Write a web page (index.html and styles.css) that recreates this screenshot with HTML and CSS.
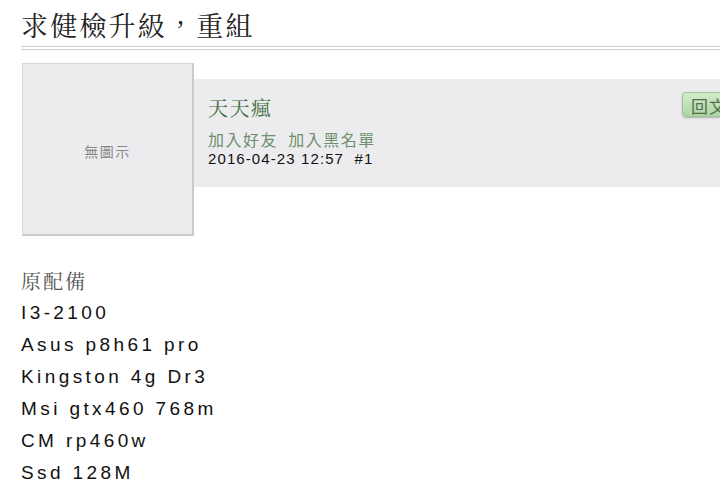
FILE: index.html
```html
<!DOCTYPE html>
<html>
    <head>
        <meta charset="utf-8" />
        <title>求健檢升級，重組</title>
        <link rel="stylesheet" href="styles.css">
    </head>
    <body>
        <div class="page">
            <h1 class="topic-title">求健檢升級，重組</h1>

            <div class="post">
                <div class="avatar">無圖示</div>
                <div class="post-head">
                    <div class="author">
                        <div class="author-name">天天瘋</div>
                        <div class="author-links">
                            <a href="#">加入好友</a>&nbsp; <a href="#">加入黑名單</a>
                        </div>
                        <div class="post-date">2016-04-23 12:57&nbsp; #1</div>
                    </div>
                    <button type="button" class="reply-btn">回文</button>
                </div>
            </div>

            <div class="post-body">
                <div class="cjk">原配備</div>
                <div>I3-2100</div>
                <div>Asus p8h61 pro</div>
                <div>Kingston 4g Dr3</div>
                <div>Msi gtx460 768m</div>
                <div>CM rp460w</div>
                <div>Ssd 128M</div>
            </div>
        </div>
    </body>
</html>
```

FILE: styles.css
```css
/* Trang bài viết */
* {
    box-sizing: border-box;
    margin: 0;
    padding: 0;
}

body {
    font-family: "Liberation Sans", Arial, "Noto Sans CJK TC", sans-serif;
    background-color: #fff;
    color: #111;
    overflow: hidden;
}

.page {
    padding-left: 21px;
}

.topic-title {
    font-family: "Noto Serif CJK TC", "Liberation Serif", "Noto Sans CJK TC", serif;
    font-size: 27px;
    font-weight: normal;
    line-height: 42px;
    letter-spacing: 2.2px;
    color: #222;
    padding-top: 4px;
    border-bottom: 4px double #cfcfcf;
}

.post {
    display: flex;
    align-items: flex-start;
    width: 760px;
    margin-top: 13px;
    padding-left: 1px;
}

.avatar {
    flex: none;
    width: 172px;
    height: 173px;
    display: flex;
    align-items: center;
    justify-content: center;
    padding-top: 4px;
    background-color: #ececee;
    border: 1px solid #d6d6d6;
    border-right: 2px solid #cbcbcb;
    border-bottom: 2px solid #cbcbcb;
    font-family: "Noto Sans CJK TC", sans-serif;
    font-size: 14px;
    letter-spacing: 1.5px;
    color: #888;
}

.post-head {
    flex: 1;
    display: flex;
    justify-content: space-between;
    align-items: flex-start;
    height: 108px;
    margin-top: 16px;
    padding: 17px 45px 0 14px;
    background-color: #ececee;
}

.author-name {
    font-family: "Noto Serif CJK TC", "Noto Sans CJK TC", serif;
    font-size: 20px;
    line-height: 24px;
    letter-spacing: 1.5px;
    color: #3d6b3d;
}

.author-links {
    margin-top: 8px;
    font-family: "Noto Sans CJK TC", sans-serif;
    font-size: 16px;
    line-height: 22px;
    letter-spacing: 1.5px;
}

.author-links a {
    color: #6f8f6f;
    text-decoration: none;
}

.post-date {
    font-size: 15px;
    line-height: 18px;
    letter-spacing: 1.1px;
    color: #111;
}

.reply-btn {
    margin-top: -4px;
    padding: 0 8px;
    height: 25px;
    font-family: "Noto Sans CJK TC", sans-serif;
    font-size: 17px;
    letter-spacing: 1px;
    color: #4f6f4f;
    background: linear-gradient(#d2ecca, #aed6a4);
    border: 1px solid #9cc792;
    border-radius: 4px;
    box-shadow: 0 1px 2px rgba(0, 0, 0, 0.25);
    cursor: pointer;
}

.post-body {
    margin-top: 29px;
    font-size: 19px;
    line-height: 32px;
    letter-spacing: 3.4px;
    color: #111;
}

.post-body .cjk {
    font-family: "Noto Serif CJK TC", "Liberation Serif", "Noto Sans CJK TC", serif;
    font-size: 20px;
    letter-spacing: 2px;
    color: #555;
}
```
